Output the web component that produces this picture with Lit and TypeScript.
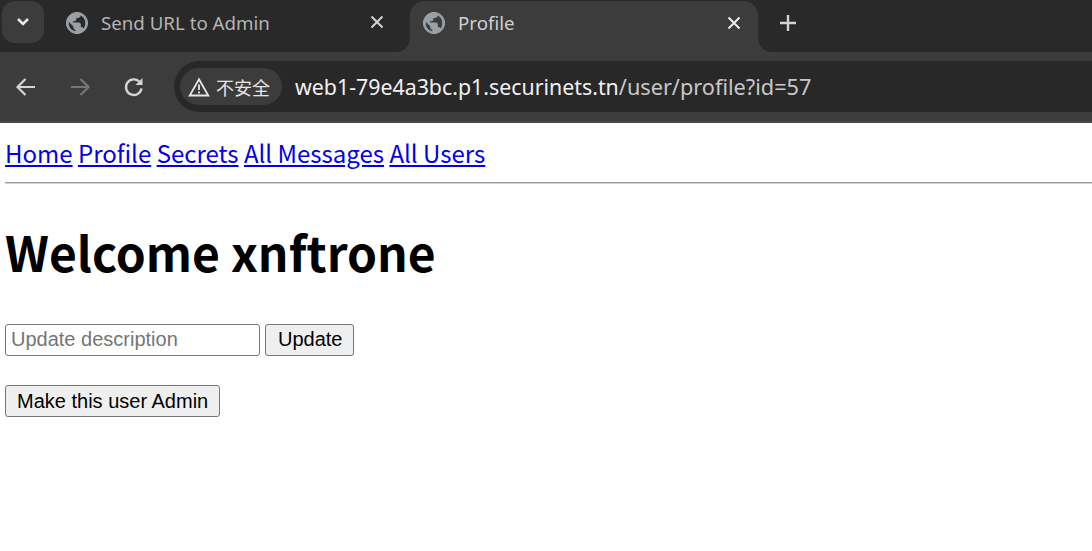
import { LitElement, html, css, svg } from "lit";
import { customElement } from "lit/decorators.js";

const globe = svg`<svg class="globe" width="22" height="22" viewBox="2 2 20 20"><path fill="#9aa0a6" stroke="#9aa0a6" stroke-width="0.9" d="M12 2.4C6.7 2.4 2.4 6.7 2.4 12s4.3 9.6 9.6 9.6 9.6-4.3 9.6-9.6S17.3 2.4 12 2.4zm-1 17.53c-3.95-.49-7-3.85-7-7.93 0-.62.08-1.21.21-1.79L9 15v1c0 1.1.9 2 2 2v1.93zm6.9-2.54c-.26-.81-1-1.39-1.9-1.39h-1v-3c0-.55-.45-1-1-1H8v-2h2c.55 0 1-.45 1-1V7h2c1.1 0 2-.9 2-2v-.41c2.93 1.19 5 4.06 5 7.41 0 2.08-.8 3.97-2.1 5.39z"/></svg>`;
const closeIcon = svg`<svg width="14" height="14" viewBox="0 0 14 14"><path d="M1.5 1.5 12.5 12.5M12.5 1.5 1.5 12.5" stroke="currentColor" stroke-width="2" fill="none"/></svg>`;

@customElement("app-root")
export class AppRoot extends LitElement {
  static styles = css`
    :host { display: block; width: 1092px; height: 551px; overflow: hidden; background: #fff; }
    .strip { height: 52px; background: #292929; display: flex; align-items: flex-start; font-family: "Noto Sans", sans-serif; }
    .search { width: 42px; height: 42px; margin: 1px 8px 0 2px; border-radius: 13px; background: #3c3c3c; display: flex; align-items: center; justify-content: center; flex: none; }
    .tab { height: 52px; display: flex; align-items: center; flex: none; font-size: 18.7px; position: relative; box-sizing: border-box; padding-bottom: 7px; }
    .tab1 { width: 358px; padding-left: 14px; color: #b4b4b4; }
    .tab2 { width: 348px; padding-left: 13px; background: #3c3c3c; color: #d0d0d0; border-radius: 14px 14px 0 0; margin-top: 1px; height: 51px; padding-bottom: 8px; }
    .tab2::before, .tab2::after { content: ""; position: absolute; bottom: 0; width: 14px; height: 14px; }
    .tab2::before { left: -14px; background: radial-gradient(circle at 0 0, transparent 13.5px, #3c3c3c 14.5px); }
    .tab2::after { right: -14px; background: radial-gradient(circle at 100% 0, transparent 13.5px, #3c3c3c 14.5px); }
    .title { flex: 1; margin-left: 13px; white-space: nowrap; }
    .close { flex: none; display: flex; margin-right: 26px; margin-top: -1px; color: #d2d2d2; }
    .tab2 .close { margin-right: 17px; margin-top: 1px; color: #ececec; }
    .plus { margin-left: 21px; margin-top: 14px; display: flex; color: #d2d2d2; }
    .toolbar { height: 71px; box-sizing: border-box; background: #3c3c3c; display: flex; align-items: flex-start; padding: 9px 0 0 15px; border-bottom: 2px solid #484848; }
    .nav { width: 22px; height: 52px; display: flex; align-items: center; margin-right: 32px; flex: none; }
    .nav.last { margin-right: 29px; }
    .omnibox { flex: 1; height: 51px; background: #282828; border-radius: 26px 0 0 26px; display: flex; align-items: center; padding-left: 6px; font-family: "Noto Sans", sans-serif; min-width: 0; }
    .pill { height: 37px; width: 102px; box-sizing: border-box; border-radius: 19px; background: #3c3c3c; display: flex; align-items: center; padding-left: 8px; gap: 6px; color: #e6e6e6; font-size: 18px; font-family: "Noto Sans CJK SC", sans-serif; flex: none; }
    .url { margin-left: 13px; font-size: 21.7px; color: #c8c8c8; white-space: nowrap; }
    .url b { font-weight: 400; font-size: 21.35px; color: #f1f1f1; }
    main { font-family: "Noto Sans CJK SC", "Noto Sans", sans-serif; color: #000; }
    .links { height: 59px; box-sizing: border-box; padding: 10px 0 0 5px; font-size: 24px; line-height: 40px; white-space: nowrap; }
    .links a { color: #0000ee; text-decoration: underline; }
    hr { margin: 0 0 0 5px; border: none; border-top: 1px solid #9a9a9a; border-bottom: 1px solid #d6d6d6; height: 0; }
    h1 { margin: 0; padding: 32px 0 0 5px; font-size: 48px; line-height: 70px; font-weight: 700; white-space: nowrap; }
    .row { display: flex; gap: 5px; margin: 38px 0 0 5px; }
    input { width: 255px; height: 32px; box-sizing: border-box; border: 1px solid #767676; border-radius: 3px; padding: 0 5px 2px; font: 20px "Liberation Sans", sans-serif; background: #fff; margin: 0; outline: none; }
    input::placeholder { color: #757575; opacity: 1; }
    button { height: 32px; box-sizing: border-box; border: 1px solid #767676; border-radius: 3px; background: #efefef; color: #000; font: 20px "Liberation Sans", sans-serif; padding: 0 11px; margin: 0; }
    button.update { padding: 0 10px 2px 12px; }
    .admin { margin: 29px 0 0 5px; }
  `;

  render() {
    return html`
      <div class="strip">
        <div class="search"><svg width="14" height="10" viewBox="0 0 14 10"><path d="M2 2 7 7 12 2" stroke="#e8e8e8" stroke-width="2.6" fill="none"/></svg></div>
        <div class="tab tab1">${globe}<span class="title">Send URL to Admin</span><span class="close">${closeIcon}</span></div>
        <div class="tab tab2">${globe}<span class="title">Profile</span><span class="close">${closeIcon}</span></div>
        <div class="plus"><svg width="18" height="18" viewBox="0 0 18 18"><path d="M9 1V17M1 9H17" stroke="currentColor" stroke-width="2.4" fill="none"/></svg></div>
      </div>
      <div class="toolbar">
        <div class="nav"><svg width="22" height="20" viewBox="0 0 22 20"><path d="M20 10H3M10.5 2 2.5 10 10.5 18" stroke="#d4d4d4" stroke-width="2.2" fill="none"/></svg></div>
        <div class="nav"><svg width="22" height="20" viewBox="0 0 22 20"><path d="M2 10H19M11.5 2 19.5 10 11.5 18" stroke="#767676" stroke-width="2.2" fill="none"/></svg></div>
        <div class="nav last"><svg width="22" height="22" viewBox="0 0 22 22"><path d="M18.5 12.5A7.8 7.8 0 1 1 16.2 5.5" stroke="#d4d4d4" stroke-width="2.4" fill="none"/><path d="M19.5 2V9H12.5Z" fill="#d4d4d4"/></svg></div>
        <div class="omnibox">
          <div class="pill"><svg width="22" height="20" viewBox="0 0 22 20"><path d="M11 2.2 20.3 18.5H1.7Z" stroke="#e6e6e6" stroke-width="1.8" fill="none"/><path d="M11 7.5V13M11 14.5V16.5" stroke="#e6e6e6" stroke-width="1.8" fill="none"/></svg><span>不安全</span></div>
          <span class="url"><b>web1-79e4a3bc.p1.securinets.tn</b>/user/profile?id=57</span>
        </div>
      </div>
      <main>
        <div class="links"><a href="#">Home</a> <a href="#">Profile</a> <a href="#">Secrets</a> <a href="#">All Messages</a> <a href="#">All Users</a></div>
        <hr />
        <h1>Welcome xnftrone</h1>
        <div class="row"><input placeholder="Update description" /><button class="update">Update</button></div>
        <div class="admin"><button>Make this user Admin</button></div>
      </main>
    `;
  }
}
